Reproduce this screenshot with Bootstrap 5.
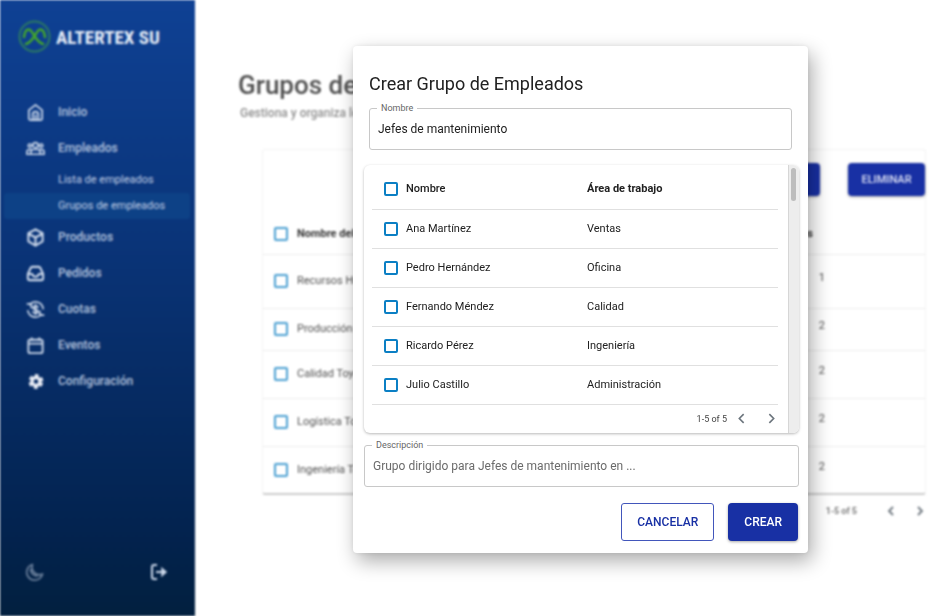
<!DOCTYPE html>
<html lang="es">
<head>
<meta charset="utf-8">
<meta name="viewport" content="width=device-width, initial-scale=1">
<title>Crear Grupo de Empleados</title>
<link href="https://cdn.jsdelivr.net/npm/bootstrap@5.3.0/dist/css/bootstrap.min.css" rel="stylesheet">
<style>
  body { font-family: Roboto, "Liberation Sans", sans-serif; font-size: 11px; line-height: 16px; color: #212121; background: #fff; }
  .app-shell { filter: blur(1px); }
  .side-panel { width: 195px; background: linear-gradient(#0f4194, #0a3478 40%, #03234f 86%, #02203f); color: #c3d0e6; }
  .brand-row { padding: 20px 18px 0; height: 94px; gap: 5px; }
  .brand-name { font-family: "Liberation Sans Narrow", "Roboto Condensed", sans-serif; font-weight: 700; font-size: 19px; line-height: 36px; color: #e4ebf6; white-space: nowrap; }
  .side-link { height: 36px; padding-left: 26px; gap: 13px; font-size: 12px; font-weight: 500; color: #b3c3de; text-decoration: none; }
  .side-link svg { width: 19px; height: 19px; color: #ccd8ea; }
  .side-subs { padding-top: 1px; }
  .side-sublink { height: 26px; margin: 0 5px 0 4px; padding-left: 54px; font-size: 11px; font-weight: 400; color: #c3d0e6; text-decoration: none; border-radius: 3px; }
  .side-sublink.active { background: #0d4186; }
  .side-foot { padding: 0 27px 34px 25px; }
  .icon-btn { background: none; border: 0; padding: 0; line-height: 0; color: #ccd8ea; }
  .page-area { padding: 69px 25px 0 43px; }
  .page-title { font-size: 26px; line-height: 32px; font-weight: 500; color: #505050; white-space: nowrap; }
  .page-sub { font-size: 12px; line-height: 16px; color: #909090; font-weight: 500; margin: 4px 0 28px 2px; }
  .groups-card { margin-left: 24px; border: 1px solid #f3f3f3; border-bottom: 2px solid #ccc; border-radius: 3px; }
  .card-tools { gap: 28px; padding-top: 13px; height: 64px; }
  .btn-solid { background: #1830a4; color: #fff; border: 0; border-radius: 4px; font-weight: 500; box-shadow: 0 1px 3px rgba(0,0,0,.35); }
  .card-tools .btn-solid { height: 33px; width: 77px; font-size: 11px; padding: 0; color: #dfe3f5; }
  .plain-table { width: 100%; border-collapse: collapse; }
  .groups-table tr { height: 48px; border-bottom: 1px solid #ececec; }
  .groups-table tbody tr:last-child { border-bottom: 0; height: 47px; }
  .groups-table thead tr { height: 40px; }
  .groups-table .row-tall { height: 54px; }
  .groups-table .row-short { height: 42px; }
  .groups-table td, .groups-table th { font-size: 11px; color: #505050; padding: 0; font-weight: 400; }
  .groups-table th { color: #333; font-weight: 700; }
  .groups-table .pick-cell { width: 34px; padding-left: 11px; }
  .groups-table .count-cell { padding: 0 100px 6px 0; text-align: right; }
  .groups-table .count-head { padding-right: 112px; text-align: right; }
  .tick { appearance: none; display: block; width: 14px; height: 14px; margin: 0; border: 2px solid #0b7fc4; border-radius: 2px; background: #fff; }
  .groups-table .tick { border-color: #4a9fd2; }
  .tick:checked { background: #0b7fc4; }
  .pager { font-size: 9px; color: #444; }
  .page-pager { height: 31px; font-weight: 500; color: #666; }
  .page-pager .pager-prev { margin: 0 17px 0 28px; }
  .overlay { padding: 0 0 17px 210px; }
  .dialog-box { width: 100%; max-width: 455px; background: #fff; border-radius: 4px; padding: 25px 9px 12px 11px; box-shadow: 4px 8px 20px rgba(0,0,0,.33), 0 0 5px rgba(0,0,0,.08); }
  .dialog-title { font-size: 18px; line-height: 26px; font-weight: 400; margin: 0 5px 11px; }
  .outlined label { position: absolute; top: -8px; left: 8px; padding: 0 4px; background: #fff; font-size: 9px; line-height: 16px; color: #666; }
  .outlined input { width: 100%; height: 42px; border: 1px solid #c8c8c8; border-radius: 3px; padding: 0 8px; font-size: 12px; color: #212121; background: #fff; display: block; }
  .outlined input::placeholder { color: #6b6b6b; opacity: 1; }
  .name-field { margin: 0 7px 15px 5px; }
  .list-card { border-radius: 6px; margin-bottom: 12px; box-shadow: 0 1px 3px rgba(0,0,0,.28); overflow: hidden; }
  .list-body { padding: 0 10px 0 8px; }
  .people-table tr { height: 39px; border-bottom: 1px solid #e0e0e0; }
  .people-table thead tr { height: 44px; }
  .people-table thead th { padding-top: 3px; }
  .people-table td, .people-table th { font-size: 11px; padding: 0; }
  .people-table th { font-weight: 500; }
  .people-table .pick-cell { width: 34px; padding-left: 12px; }
  .people-table .name-cell { width: 181px; }
  .list-pager { height: 28px; }
  .list-pager .pager-prev { margin: 0 17px 0 8px; }
  .scroll-rail { width: 11px; background: #ededed; border-left: 1px solid #d6d6d6; padding: 3px 2px; }
  .scroll-thumb { height: 33px; width: 5px; border-radius: 3px; background: #bdbdbd; }
  .dialog-actions { gap: 14px; margin: 16px 1px 0 0; }
  .dialog-actions .btn { height: 38px; font-size: 12px; font-weight: 500; padding: 0 16px; }
  .dialog-actions .btn-line { border: 1px solid #4256bb; color: #1830a4; border-radius: 3px; background: #fff; padding: 0 15px; }
</style>
<script src="https://cdn.jsdelivr.net/npm/bootstrap@5.3.0/dist/js/bootstrap.bundle.min.js"></script>
</head>
<body>
<div class="app-shell d-flex min-vh-100">
  <aside class="side-panel d-flex flex-column flex-shrink-0">
    <div class="brand-row d-flex align-items-start">
      <svg width="33" height="33" viewBox="0 0 33 33" fill="none" stroke-linecap="round" class="flex-shrink-0">
        <circle cx="16.500" cy="16.500" r="15" stroke="#2c7a62" stroke-width="2"/>
        <path d="M6 17Q7 9 11 9.500C15 10 17 22 25 24M27 17Q26 9 22 9.500C18 10 16 22 8 24" stroke="#43a52c" stroke-width="2.600"/>
      </svg>
      <span class="brand-name">ALTERTEX SU</span>
    </div>
    <nav>
      <a href="#" class="side-link d-flex align-items-center">
        <svg viewBox="0 0 20 20" fill="none" stroke="currentColor" stroke-width="1.800" stroke-linejoin="round"><path d="M3 7.500 10 2l7 5.500V16a2 2 0 0 1-2 2H5a2 2 0 0 1-2-2zM7 18v-6a3 3 0 0 1 6 0v6M10 12v6"/></svg>
        Inicio</a>
      <a href="#" class="side-link d-flex align-items-center">
        <svg viewBox="0 0 20 20" fill="none" stroke="currentColor" stroke-width="1.700"><circle cx="10" cy="6.500" r="2.700"/><circle cx="4" cy="7" r="1.700"/><circle cx="16" cy="7" r="1.700"/><path d="M5 16v-2q0-3 3-3h4q3 0 3 3v2zM5 16H1v-2.500Q1 11 4 11h2M15 16h4v-2.500Q19 11 16 11h-2"/></svg>
        Empleados</a>
      <div class="side-subs">
        <a href="#" class="side-sublink d-flex align-items-center">Lista de empleados</a>
        <a href="#" class="side-sublink active d-flex align-items-center" aria-current="page">Grupos de empleados</a>
      </div>
      <a href="#" class="side-link d-flex align-items-center">
        <svg viewBox="0 0 20 20" fill="none" stroke="currentColor" stroke-width="2.200" stroke-linejoin="round"><path d="m10 1.500 7.500 4v8.500L10 18.500 2.500 14V5.500zM2.500 6 10 10l7.500-4M10 10v8"/></svg>
        Productos</a>
      <a href="#" class="side-link d-flex align-items-center">
        <svg viewBox="0 0 20 20" fill="none" stroke="currentColor" stroke-width="2.200" stroke-linejoin="round"><path d="M2 10.500 5 4q.400-1 1.500-1h7q1.100 0 1.500 1l3 6.500V15q0 2-2 2H4q-2 0-2-2zM2 10.500h4.500q1 3 3.500 3t3.500-3H18"/></svg>
        Pedidos</a>
      <a href="#" class="side-link d-flex align-items-center">
        <svg viewBox="0 0 20 20" fill="none" stroke="currentColor" stroke-width="1.800" stroke-linecap="round"><path d="M1.500 4h4V8M4 4.500A8.200 8.200 0 0 1 18 9M18.500 16h-4v-4M16 15.500A8.200 8.200 0 0 1 2 11.500M12.500 7.500q-1-1.200-2.500-1.200-2.500 0-2.500 1.800 0 1.500 2.500 1.900 2.500.400 2.500 2 0 1.800-2.500 1.800-1.700 0-2.700-1.200M10 5v10"/></svg>
        Cuotas</a>
      <a href="#" class="side-link d-flex align-items-center">
        <svg viewBox="0 0 20 20" fill="none" stroke="currentColor" stroke-width="2" stroke-linejoin="round"><rect x="2.500" y="4" width="15" height="14" rx="2"/><path d="M2.500 8h15M6 1.500V5M14 1.500V5"/></svg>
        Eventos</a>
      <a href="#" class="side-link d-flex align-items-center">
        <svg viewBox="0 0 20 20" fill="none" stroke="#e9ecf5"><circle cx="10.500" cy="10" r="4.200" stroke-width="3.600"/><circle cx="10.500" cy="10" r="6.600" stroke-width="2.400" stroke-dasharray="4 2.910" stroke-dashoffset="-1.450"/></svg>
        Configuración</a>
    </nav>
    <div class="side-foot d-flex justify-content-between align-items-center mt-auto">
      <button type="button" class="icon-btn opacity-50" aria-label="Modo oscuro"><svg width="20" height="20" viewBox="0 0 20 20" fill="none" stroke="currentColor" stroke-width="1.800" stroke-linejoin="round"><path d="M7.500 2.500A8 8 0 1 0 17.500 12 7.500 7.500 0 0 1 7.500 2.500zM5.500 7a7 7 0 0 0 7 7"/></svg></button>
      <button type="button" class="icon-btn" aria-label="Cerrar sesión"><svg width="18" height="18" viewBox="0 0 18 18" fill="none" stroke="currentColor" stroke-width="2"><path d="M7 2H4Q2 2 2 4v10q0 2 2 2h3M6 9h7"/><path d="m12 5.500 4 3.500-4 3.500z" fill="currentColor" stroke-width="1.500"/></svg></button>
    </div>
  </aside>
  <main class="page-area flex-grow-1">
    <h1 class="page-title mb-0">Grupos de Empleados</h1>
    <p class="page-sub">Gestiona y organiza los grupos de empleados</p>
    <section class="groups-card">
      <div class="card-tools d-flex justify-content-end">
        <button type="button" class="btn-solid">CREAR</button>
        <button type="button" class="btn-solid">ELIMINAR</button>
      </div>
      <table class="plain-table groups-table">
        <thead><tr><th class="pick-cell"><input type="checkbox" class="tick" aria-label="Seleccionar todos los grupos"></th><th>Nombre del grupo</th><th class="count-head">Empleados</th></tr></thead>
        <tbody>
          <tr class="row-tall"><td class="pick-cell"><input type="checkbox" class="tick" aria-label="Recursos Humanos"></td><td>Recursos Humanos</td><td class="count-cell">1</td></tr>
          <tr class="row-short"><td class="pick-cell"><input type="checkbox" class="tick" aria-label="Producción Toyota"></td><td>Producción Toyota</td><td class="count-cell">2</td></tr>
          <tr><td class="pick-cell"><input type="checkbox" class="tick" aria-label="Calidad Toyota"></td><td>Calidad Toyota</td><td class="count-cell">2</td></tr>
          <tr><td class="pick-cell"><input type="checkbox" class="tick" aria-label="Logística Toyota"></td><td>Logística Toyota</td><td class="count-cell">2</td></tr>
          <tr><td class="pick-cell"><input type="checkbox" class="tick" aria-label="Ingeniería Toyota"></td><td>Ingeniería Toyota</td><td class="count-cell">2</td></tr>
        </tbody>
      </table>
    </section>
    <div class="pager page-pager d-flex justify-content-end align-items-center">
      <span>1-5 of 5</span>
      <button type="button" class="icon-btn text-secondary pager-prev" aria-label="Anterior"><svg width="12" height="12" viewBox="0 0 12 12" fill="none" stroke="currentColor" stroke-width="1.800"><path d="M8 2 4 6l4 4"/></svg></button>
      <button type="button" class="icon-btn text-secondary" aria-label="Siguiente"><svg width="12" height="12" viewBox="0 0 12 12" fill="none" stroke="currentColor" stroke-width="1.800"><path d="m4 2 4 4-4 4"/></svg></button>
    </div>
  </main>
</div>

<div class="overlay position-fixed top-0 start-0 w-100 h-100 d-flex align-items-center justify-content-center">
  <form class="dialog-box" role="dialog" aria-labelledby="dialogTitle">
    <h2 class="dialog-title" id="dialogTitle">Crear Grupo de Empleados</h2>
    <div class="outlined name-field position-relative">
      <input type="text" id="groupName" value="Jefes de mantenimiento">
      <label for="groupName">Nombre</label>
    </div>
    <div class="list-card d-flex">
      <div class="list-body flex-grow-1">
        <table class="plain-table people-table">
          <thead><tr><th class="pick-cell"><input type="checkbox" class="tick" aria-label="Seleccionar todos"></th><th class="name-cell">Nombre</th><th class="fw-bold">Área de trabajo</th></tr></thead>
          <tbody>
            <tr><td class="pick-cell"><input type="checkbox" class="tick" id="p1"></td><td class="name-cell"><label for="p1">Ana Martínez</label></td><td>Ventas</td></tr>
            <tr><td class="pick-cell"><input type="checkbox" class="tick" id="p2"></td><td class="name-cell"><label for="p2">Pedro Hernández</label></td><td>Oficina</td></tr>
            <tr><td class="pick-cell"><input type="checkbox" class="tick" id="p3"></td><td class="name-cell"><label for="p3">Fernando Méndez</label></td><td>Calidad</td></tr>
            <tr><td class="pick-cell"><input type="checkbox" class="tick" id="p4"></td><td class="name-cell"><label for="p4">Ricardo Pérez</label></td><td>Ingeniería</td></tr>
            <tr><td class="pick-cell"><input type="checkbox" class="tick" id="p5"></td><td class="name-cell"><label for="p5">Julio Castillo</label></td><td>Administración</td></tr>
          </tbody>
        </table>
        <div class="pager list-pager d-flex justify-content-end align-items-center">
          <span>1-5 of 5</span>
          <button type="button" class="icon-btn text-secondary pager-prev" aria-label="Anterior"><svg width="13" height="13" viewBox="0 0 12 12" fill="none" stroke="currentColor" stroke-width="1.500"><path d="M8 2 4 6l4 4"/></svg></button>
          <button type="button" class="icon-btn text-secondary" aria-label="Siguiente"><svg width="13" height="13" viewBox="0 0 12 12" fill="none" stroke="currentColor" stroke-width="1.500"><path d="m4 2 4 4-4 4"/></svg></button>
        </div>
      </div>
      <div class="scroll-rail flex-shrink-0"><div class="scroll-thumb"></div></div>
    </div>
    <div class="outlined position-relative">
      <input type="text" id="groupDesc" placeholder="Grupo dirigido para Jefes de mantenimiento en ...">
      <label for="groupDesc">Descripción</label>
    </div>
    <div class="dialog-actions d-flex justify-content-end">
      <button type="button" class="btn btn-line">CANCELAR</button>
      <button type="submit" class="btn btn-solid">CREAR</button>
    </div>
  </form>
</div>
</body>
</html>
